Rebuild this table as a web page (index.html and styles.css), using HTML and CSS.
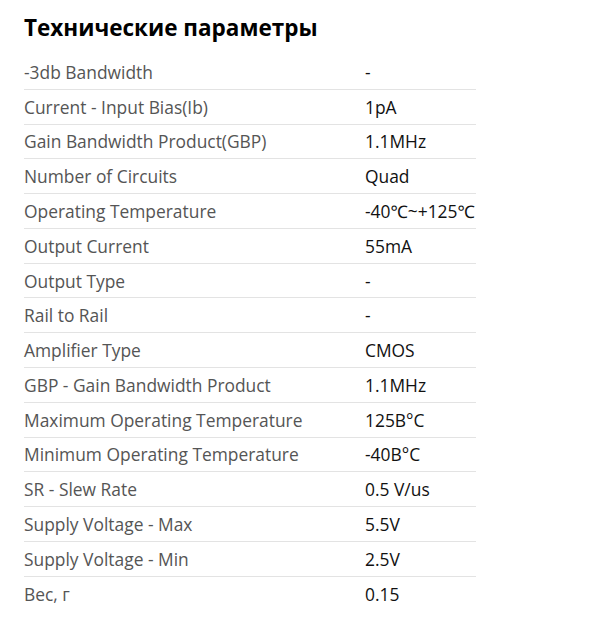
FILE: index.html
```html
<!DOCTYPE html>
<html lang="ru">
<head>
<meta charset="utf-8">
<link rel="stylesheet" href="styles.css">
</head>
<body>
<section class="specs">
  <h2 class="specs-title">Технические параметры</h2>
  <div class="specs-table">
    <div class="row"><div class="label">-3db Bandwidth</div><div class="value">-</div></div>
    <div class="row"><div class="label">Current - Input Bias(Ib)</div><div class="value">1pA</div></div>
    <div class="row"><div class="label">Gain Bandwidth Product(GBP)</div><div class="value">1.1MHz</div></div>
    <div class="row"><div class="label">Number of Circuits</div><div class="value">Quad</div></div>
    <div class="row"><div class="label">Operating Temperature</div><div class="value">-40℃~+125℃</div></div>
    <div class="row"><div class="label">Output Current</div><div class="value">55mA</div></div>
    <div class="row"><div class="label">Output Type</div><div class="value">-</div></div>
    <div class="row"><div class="label">Rail to Rail</div><div class="value">-</div></div>
    <div class="row"><div class="label">Amplifier Type</div><div class="value">CMOS</div></div>
    <div class="row"><div class="label">GBP - Gain Bandwidth Product</div><div class="value">1.1MHz</div></div>
    <div class="row"><div class="label">Maximum Operating Temperature</div><div class="value">125B°C</div></div>
    <div class="row"><div class="label">Minimum Operating Temperature</div><div class="value">-40B°C</div></div>
    <div class="row"><div class="label">SR - Slew Rate</div><div class="value">0.5 V/us</div></div>
    <div class="row"><div class="label">Supply Voltage - Max</div><div class="value">5.5V</div></div>
    <div class="row"><div class="label">Supply Voltage - Min</div><div class="value">2.5V</div></div>
    <div class="row"><div class="label">Вес, г</div><div class="value">0.15</div></div>
  </div>
</section>
</body>
</html>
```
FILE: styles.css
```css
html, body {
  margin: 0;
  padding: 0;
  background: #fff;
}
body {
  font-family: "Open Sans", "Noto Sans", sans-serif;
}
.specs {
  padding: 12px 24px 0 24px;
}
.specs-title {
  margin: 0;
  font-size: 22.5px;
  font-weight: 700;
  line-height: 32px;
  color: #000;
}
.specs-table {
  width: 452px;
  margin-top: 11px;
}
.row {
  display: grid;
  grid-template-columns: 341px 111px;
  border-bottom: 1px solid #e3e3e3;
  padding: 4.9px 0;
  font-size: 17.4px;
  line-height: 24px;
}
.row:last-child {
  border-bottom: none;
}
.label {
  color: #555;
  white-space: nowrap;
}
.value {
  color: #111;
  white-space: nowrap;
  overflow: hidden;
}
```
